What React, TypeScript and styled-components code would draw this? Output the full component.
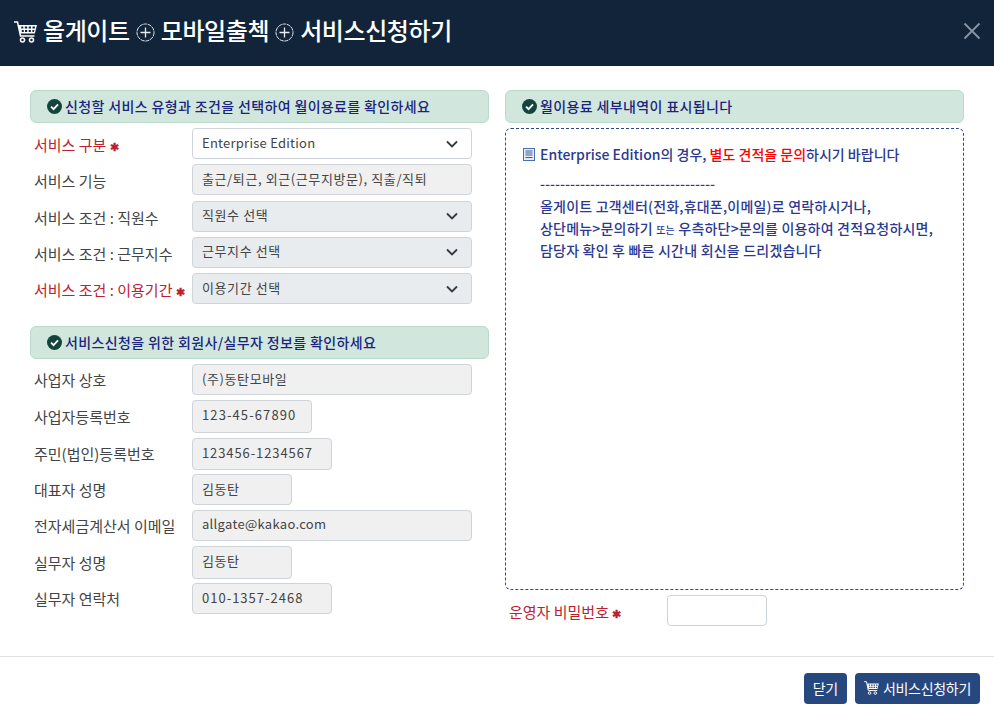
import React from 'react';
import styled, { createGlobalStyle } from 'styled-components';

const GlobalStyle = createGlobalStyle`
  html, body {
    margin: 0;
    padding: 0;
    background: #fff;
    font-family: "Noto Sans CJK KR", "Noto Sans", sans-serif;
  }
`;

const Modal = styled.div`
  width: 994px;
  height: 718px;
  display: flex;
  flex-direction: column;
  overflow: hidden;
`;

const Header = styled.header`
  height: 66px;
  flex: none;
  box-sizing: border-box;
  display: flex;
  align-items: center;
  justify-content: space-between;
  padding: 0 12px 6px 14px;
  background: #12243a;
  color: #fff;
`;

const Title = styled.h1`
  margin: 0;
  display: flex;
  align-items: center;
  gap: 6px;
  font-size: 24px;
  line-height: 30px;
  font-weight: 500;
  letter-spacing: -0.4px;
`;

const CloseButton = styled.button`
  border: 0;
  padding: 0;
  margin-top: 2px;
  background: none;
  display: flex;
  color: #8a95a3;
`;

const Body = styled.main`
  flex: 1;
  display: grid;
  grid-template-columns: 459px 459px;
  column-gap: 16px;
  padding: 24px 30px 0;
  align-items: start;
`;

const Column = styled.section`
  display: flex;
  flex-direction: column;
`;

const Banner = styled.div<{ $mt?: number }>`
  height: 33px;
  box-sizing: border-box;
  margin-top: ${p => p.$mt || 0}px;
  padding: 0 0 2px 16px;
  display: flex;
  align-items: center;
  gap: 3px;
  background: #d1e7dd;
  border: 1px solid #badbcc;
  border-radius: 6px;
  color: #1a237e;
  font-size: 14px;
  font-weight: 500;
  letter-spacing: 0.36px;
`;

const Rows = styled.div<{ $gap: number }>`
  display: flex;
  flex-direction: column;
  gap: ${p => p.$gap}px;
  margin-top: 5px;
  padding-left: 4px;
`;

const Row = styled.div`
  display: flex;
  align-items: center;
`;

const Label = styled.label<{ $required?: boolean; $flat?: boolean }>`
  width: 158px;
  flex: none;
  padding-top: ${p => (p.$flat ? 0 : 2)}px;
  font-size: 15px;
  white-space: nowrap;
  color: ${p => (p.$required ? '#bd2130' : '#444')};
`;

const Star = styled.span`
  font-size: 11px;
  font-weight: 700;
  color: #bd2130;
`;

const Field = styled.div<{ $width?: number; $h?: number; $ls?: number }>`
  width: ${p => p.$width || 280}px;
  height: ${p => p.$h || 31}px;
  box-sizing: border-box;
  padding: 0 9px 3px;
  display: flex;
  align-items: center;
  background: #f0f0f0;
  border: 1px solid #ced4da;
  border-radius: 4px;
  color: #444;
  font-size: 13px;
  letter-spacing: ${p => p.$ls ?? 0.6}px;
`;

const SelectBox = styled(Field)<{ $open?: boolean }>`
  justify-content: space-between;
  padding-right: 13px;
  background: ${p => (p.$open ? '#fff' : '#e9ecef')};
`;

const DetailBox = styled.div`
  height: 462px;
  box-sizing: border-box;
  margin-top: 5px;
  padding: 15px 17px;
  border: 1px dashed #2a4a86;
  border-radius: 6px;
  color: #2b3990;
  font-size: 14px;
  font-weight: 500;
`;

const DetailHead = styled.div`
  display: flex;
  align-items: center;
  gap: 5px;
  line-height: 20px;
`;

const Red = styled.span`
  color: #f00;
`;

const DetailText = styled.div`
  margin: 8px 0 0 17px;
  line-height: 22px;
  letter-spacing: 0.2px;
`;

const Dashes = styled.div`
  letter-spacing: 0;
  margin-bottom: 1px;
`;

const Tiny = styled.span`
  font-size: 10px;
  line-height: 0;
`;

const PasswordRow = styled(Row)`
  margin-top: 5px;
  padding-left: 4px;
`;

const PasswordInput = styled.input`
  width: 100px;
  height: 31px;
  box-sizing: border-box;
  background: #fff;
  border: 1px solid #ced4da;
  border-radius: 4px;
`;

const Footer = styled.footer`
  height: 62px;
  flex: none;
  box-sizing: border-box;
  display: flex;
  justify-content: flex-end;
  gap: 8px;
  padding: 16px 14px 0 0;
  border-top: 1px solid #dee2e6;
`;

const Button = styled.button`
  height: 31px;
  padding: 0 9px 1px;
  display: flex;
  align-items: center;
  gap: 4px;
  border: 0;
  border-radius: 4px;
  background: #27477f;
  color: #fff;
  font-family: inherit;
  font-size: 14px;
  letter-spacing: -0.3px;
`;

const Cart = ({ width, height }: { width: number; height: number }) => (
  <svg width={width} height={height} viewBox="0 0 23 22">
    <path d="M0 1h3.500l3 14h14" fill="none" stroke="#fff" strokeWidth="1.500" />
    <path
      fillRule="evenodd"
      fill="#fff"
      d="M4.500 4H23l-2.200 8.500H6.300zM7.300 5.500v2h2v-2zM10.800 5.500v2h2.400v-2zM14.700 5.500v2h2.300v-2zM18.500 5.500v2h2.400v-2zM7.800 9v2h2v-2zM11 9v2h2.200v-2zM14.700 9v2h2.200v-2zM18.400 9v2h1.500l.5-2z"
    />
    <circle cx="8.500" cy="19" r="2" fill="none" stroke="#fff" strokeWidth="1.500" />
    <circle cx="17.500" cy="19" r="2" fill="none" stroke="#fff" strokeWidth="1.500" />
  </svg>
);

const TitleCart = styled.span`
  display: flex;
  margin-top: 4px;
`;

const PlusIcon = styled.svg`
  margin-top: 5px;
`;

const PlusCircle = () => (
  <PlusIcon width="19" height="19" viewBox="0 0 19 19" fill="none" stroke="#e8eaec">
    <circle cx="9.500" cy="9.500" r="8.500" strokeWidth="1" strokeDasharray="4 .7" />
    <path d="M9.500 4.500v10M4.500 9.500h10" strokeWidth="1.300" />
  </PlusIcon>
);

const CheckSvg = styled.svg`
  margin-top: 2px;
`;

const CheckIcon = () => (
  <CheckSvg width="15" height="15" viewBox="0 0 14 14">
    <circle cx="7" cy="7" r="7" fill="#14453d" />
    <path d="M3.800 7.200l2.300 2.300 4.200-4.400" fill="none" stroke="#fff" strokeWidth="1.700" />
  </CheckSvg>
);

const ChevronSvg = styled.svg`
  margin-top: 3px;
`;

const Chevron = () => (
  <ChevronSvg width="12" height="8" viewBox="0 0 12 8" fill="none" stroke="#343a40" strokeWidth="1.800">
    <path d="M1 1.500l5 5 5-5" />
  </ChevronSvg>
);

const DocIcon = () => (
  <svg width="12" height="13" viewBox="0 0 12 13" fill="#e6ecf6" stroke="#4a6fb5">
    <rect x=".5" y=".5" width="11" height="12" />
    <path d="M2.500 3h7M2.500 5h7M2.500 7h7M2.500 9.500h7" stroke="#3a5a9c" />
  </svg>
);

const CloseIcon = () => (
  <svg width="20" height="20" viewBox="0 0 20 20" fill="none" stroke="currentColor" strokeWidth="1.800">
    <path d="M2.500 2.500l15 15M17.500 2.500l-15 15" />
  </svg>
);

const selects = [
  { label: '서비스 조건 : 직원수', value: '직원수 선택' },
  { label: '서비스 조건 : 근무지수', value: '근무지수 선택' },
];

const company = [
  { label: '사업자 상호', value: '(주)동탄모바일', width: 280, h: 31 },
  { label: '사업자등록번호', value: '123-45-67890', width: 120, h: 33, ls: 1.1 },
  { label: '주민(법인)등록번호', value: '123456-1234567', width: 140, h: 32, ls: 0.9 },
  { label: '대표자 성명', value: '김동탄', width: 100, h: 31 },
  { label: '전자세금계산서 이메일', value: 'allgate@kakao.com', width: 280, h: 31, ls: 0.3 },
  { label: '실무자 성명', value: '김동탄', width: 100, h: 33 },
  { label: '실무자 연락처', value: '010-1357-2468', width: 140, h: 31, ls: 1 },
];

export default function App() {
  return (
    <Modal>
      <GlobalStyle />
      <Header>
        <Title>
          <TitleCart>
            <Cart width={23} height={22} />
          </TitleCart>
          올게이트
          <PlusCircle />
          모바일출첵
          <PlusCircle />
          서비스신청하기
        </Title>
        <CloseButton aria-label="닫기">
          <CloseIcon />
        </CloseButton>
      </Header>
      <Body>
        <Column>
          <Banner>
            <CheckIcon />
            신청할 서비스 유형과 조건을 선택하여 월이용료를 확인하세요
          </Banner>
          <Rows $gap={5.33}>
            <Row>
              <Label $required>
                서비스 구분 <Star>✱</Star>
              </Label>
              <SelectBox $open $ls={0.25}>
                Enterprise Edition
                <Chevron />
              </SelectBox>
            </Row>
            <Row>
              <Label>서비스 기능</Label>
              <Field>출근/퇴근, 외근(근무지방문), 직출/직퇴</Field>
            </Row>
            {selects.map(s => (
              <Row key={s.label}>
                <Label>{s.label}</Label>
                <SelectBox>
                  {s.value}
                  <Chevron />
                </SelectBox>
              </Row>
            ))}
            <Row>
              <Label $required>
                서비스 조건 : 이용기간 <Star>✱</Star>
              </Label>
              <SelectBox>
                이용기간 선택
                <Chevron />
              </SelectBox>
            </Row>
          </Rows>
          <Banner $mt={22}>
            <CheckIcon />
            서비스신청을 위한 회원사/실무자 정보를 확인하세요
          </Banner>
          <Rows $gap={4.67}>
            {company.map(c => (
              <Row key={c.label}>
                <Label $flat>{c.label}</Label>
                <Field $width={c.width} $h={c.h} $ls={c.ls}>
                  {c.value}
                </Field>
              </Row>
            ))}
          </Rows>
        </Column>
        <Column>
          <Banner>
            <CheckIcon />
            월이용료 세부내역이 표시됩니다
          </Banner>
          <DetailBox>
            <DetailHead>
              <DocIcon />
              <span>
                Enterprise Edition의 경우, <Red>별도 견적을 문의</Red>하시기 바랍니다
              </span>
            </DetailHead>
            <DetailText>
              <Dashes>-----------------------------------</Dashes>
              올게이트 고객센터(전화,휴대폰,이메일)로 연락하시거나,
              <br />
              상단메뉴&gt;문의하기 <Tiny>또는</Tiny> 우측하단&gt;문의를 이용하여 견적요청하시면,
              <br />
              담당자 확인 후 빠른 시간내 회신을 드리겠습니다
            </DetailText>
          </DetailBox>
          <PasswordRow>
            <Label $required>
              운영자 비밀번호 <Star>✱</Star>
            </Label>
            <PasswordInput type="password" />
          </PasswordRow>
        </Column>
      </Body>
      <Footer>
        <Button>닫기</Button>
        <Button>
          <Cart width={15} height={14} />
          서비스신청하기
        </Button>
      </Footer>
    </Modal>
  );
}
